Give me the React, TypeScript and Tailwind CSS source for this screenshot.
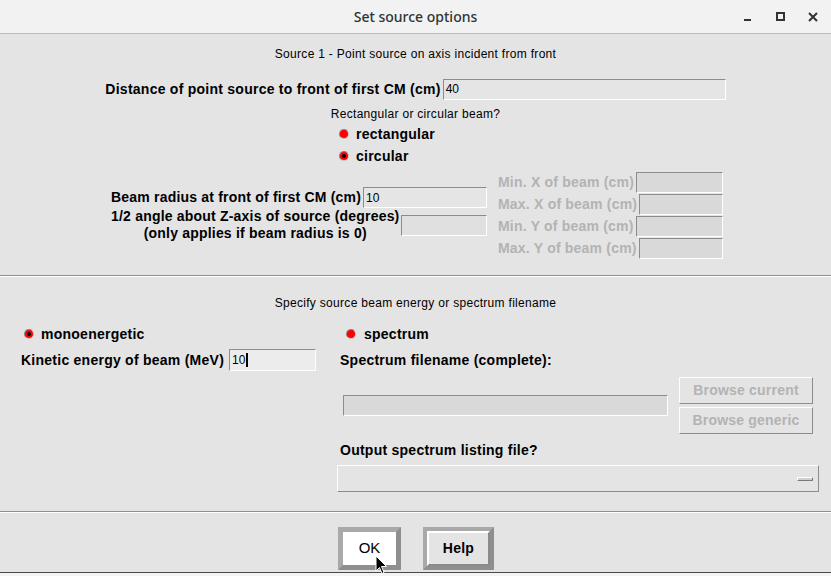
import React from "react";

const sans = { fontFamily: '"Liberation Sans", Arial, sans-serif' };

function Radio({ checked = false }: { checked?: boolean }) {
  return (
    <span className="flex h-[10px] w-[10px] shrink-0 items-center justify-center rounded-full border border-t-[#8a8a8a] border-l-[#8a8a8a] border-b-[#c8c8c8] border-r-[#c8c8c8] bg-[#ff0000]">
      {checked && <span className="h-[4px] w-[4px] rounded-full bg-black" />}
    </span>
  );
}

function Entry({
  className = "",
  disabled = false,
  children,
}: {
  className?: string;
  disabled?: boolean;
  children?: React.ReactNode;
}) {
  return (
    <div
      className={[
        "flex items-center border border-t-[#8c8c8c] border-l-[#8c8c8c] border-b-white border-r-white px-[2px] text-[12px] font-normal tracking-normal text-black",
        disabled ? "bg-[#d9d9d9]" : "bg-[#e5e5e5]",
        className,
      ].join(" ")}
    >
      {children}
    </div>
  );
}

function Separator() {
  return <div className="h-[2px] w-full border-t border-t-[#8f8f8f] border-b border-b-white" />;
}

export default function App() {
  return (
    <div
      className="relative flex h-[576px] w-[831px] flex-col overflow-hidden bg-[#e4e4e4] text-black"
      style={sans}
    >
      {/* title bar */}
      <div className="relative flex h-[34px] shrink-0 items-center justify-center border-b border-b-[#bcbcbc] bg-[#f2f2f2]">
        <span
          className="text-[14px] font-medium text-[#2e3436]"
          style={{ fontFamily: '"Noto Sans", "DejaVu Sans", sans-serif' }}
        >
          Set source options
        </span>
        <div className="absolute right-[12px] top-0 flex h-[34px] items-center gap-[21px] text-[#2e3436]">
          <svg width="12" height="12" viewBox="0 0 12 12">
            <rect x="3" y="8" width="7" height="2" fill="currentColor" />
          </svg>
          <svg width="12" height="12" viewBox="0 0 12 12">
            <rect x="3" y="2" width="7" height="7" fill="none" stroke="currentColor" strokeWidth="2" />
          </svg>
          <svg width="12" height="12" viewBox="0 0 12 12">
            <path d="M2 2 L10 10 M10 2 L2 10" stroke="currentColor" strokeWidth="2" />
          </svg>
        </div>
      </div>

      {/* source section */}
      <div className="flex h-[40px] items-center justify-center text-[12px] tracking-[0.3px]">
        Source 1 - Point source on axis incident from front
      </div>
      <div className="flex h-[30px] items-center justify-center">
        <span className="text-[14px] font-bold tracking-[0.25px]">
          Distance of point source to front of first CM (cm)
        </span>
        <Entry className="ml-[2px] h-[21px] w-[283px]">40</Entry>
      </div>
      <div className="flex h-[19px] items-center justify-center text-[12px] tracking-[0.3px]">
        Rectangular or circular beam?
      </div>
      <div className="flex h-[22px] items-center gap-[7px] pl-[339px]">
        <Radio />
        <span className="text-[14px] font-bold tracking-[0.25px]">rectangular</span>
      </div>
      <div className="flex h-[22px] items-center gap-[7px] pl-[339px]">
        <Radio checked />
        <span className="text-[14px] font-bold tracking-[0.25px]">circular</span>
      </div>

      <div className="flex h-[104px] pl-[111px] pt-[4px] text-[14px] font-bold tracking-[0.2px]">
        <div className="flex w-[376px] flex-col pt-[16px]">
          <div className="flex h-[21px] items-center">
            <span className="whitespace-nowrap">Beam radius at front of first CM (cm)</span>
            <Entry className="ml-[2px] h-[21px] flex-1">10</Entry>
          </div>
          <div className="flex items-center">
            <div className="flex flex-col items-center whitespace-nowrap leading-[17px]">
              <span>1/2 angle about Z-axis of source (degrees)</span>
              <span>(only applies if beam radius is 0)</span>
            </div>
            <Entry disabled className="ml-[2px] h-[21px] flex-1 bg-[#e0e0e0]" />
          </div>
        </div>
        <div className="ml-[11px] flex w-[225px] flex-col text-[#b3b3b3]">
          <div className="flex h-[22px] items-center">
            <span className="whitespace-nowrap">Min. X of beam (cm)</span>
            <Entry disabled className="ml-[2px] h-[21px] flex-1" />
          </div>
          <div className="flex h-[22px] items-center">
            <span className="whitespace-nowrap">Max. X of beam (cm)</span>
            <Entry disabled className="ml-[2px] h-[21px] flex-1" />
          </div>
          <div className="flex h-[22px] items-center">
            <span className="whitespace-nowrap">Min. Y of beam (cm)</span>
            <Entry disabled className="ml-[2px] h-[21px] flex-1" />
          </div>
          <div className="flex h-[22px] items-center">
            <span className="whitespace-nowrap">Max. Y of beam (cm)</span>
            <Entry disabled className="ml-[2px] h-[21px] flex-1" />
          </div>
        </div>
      </div>

      <div className="mt-[4px]">
        <Separator />
      </div>

      {/* energy section */}
      <div className="mt-[16px] flex h-[20px] items-center justify-center text-[12px] tracking-[0.3px]">
        Specify source beam energy or spectrum filename
      </div>
      <div className="mt-[10px] flex text-[14px] font-bold tracking-[0.25px]">
        <div className="flex w-[337px] flex-col pl-[21px]">
          <div className="flex h-[22px] items-center gap-[7px] pl-[3px]">
            <Radio checked />
            <span>monoenergetic</span>
          </div>
          <div className="flex h-[30px] items-center">
            <span className="whitespace-nowrap">Kinetic energy of beam (MeV)</span>
            <Entry className="ml-[5px] h-[22px] w-[87px] bg-[#ececec]">
              10<span className="ml-[1px] inline-block h-[14px] w-[2px] bg-black" />
            </Entry>
          </div>
        </div>
        <div className="flex w-[482px] flex-col">
          <div className="flex h-[22px] items-center gap-[8px] pl-[9px]">
            <Radio />
            <span>spectrum</span>
          </div>
          <div className="flex h-[30px] items-center pl-[3px]">
            <span>Spectrum filename (complete):</span>
          </div>
          <div className="flex h-[62px]">
            <Entry disabled className="ml-[6px] mt-[20px] h-[21px] w-[325px]" />
            <div className="ml-[11px] mt-[2px] flex flex-col gap-[3px]">
              <div className="flex h-[27px] w-[134px] items-center justify-center border border-t-white border-l-white border-b-[#8c8c8c] border-r-[#8c8c8c] tracking-[0.2px] text-[#b3b3b3]">
                Browse current
              </div>
              <div className="flex h-[27px] w-[134px] items-center justify-center border border-t-white border-l-white border-b-[#8c8c8c] border-r-[#8c8c8c] tracking-[0.2px] text-[#b3b3b3]">
                Browse generic
              </div>
            </div>
          </div>
          <div className="flex h-[26px] items-center pl-[3px]">
            <span>Output spectrum listing file?</span>
          </div>
          <div className="mt-[2px] flex h-[27px] w-[482px] items-center justify-end border border-t-white border-l-white border-b-[#8c8c8c] border-r-[#8c8c8c] pr-[5px]">
            <div className="h-[4px] w-[16px] border border-t-white border-l-white border-b-[#7a7a7a] border-r-[#7a7a7a] bg-[#d0d0d0]" />
          </div>
        </div>
      </div>

      <div className="mt-[19px]">
        <Separator />
      </div>

      {/* buttons */}
      <div className="mt-[14px] flex gap-[22px] pl-[338px]">
        <div className="h-[43px] w-[63px] border-[5px] border-t-[#a9a9a9] border-l-[#a9a9a9] border-b-[#8f8f8f] border-r-[#8f8f8f]">
          <div className="flex h-full w-full items-center justify-center bg-white text-[15px]">OK</div>
        </div>
        <div className="h-[43px] w-[71px] border-[4px] border-t-[#a9a9a9] border-l-[#a9a9a9] border-b-[#8f8f8f] border-r-[#8f8f8f]">
          <div className="flex h-full w-full items-center justify-center border-2 border-t-white border-l-white border-b-[#8a8a8a] border-r-[#8a8a8a] bg-[#e4e4e4] text-[14px] font-bold tracking-[0.25px]">
            Help
          </div>
        </div>
      </div>

      {/* window below */}
      <div className="absolute bottom-0 left-0 h-[4px] w-full border-t border-t-[#4a4a4a] bg-[#f4f4f4]" />

      {/* mouse cursor */}
      <svg className="absolute left-[375px] top-[555px]" width="13" height="20" viewBox="0 0 13 20">
        <path d="M1 1 L1 16 L4.5 12.5 L7 18.5 L9 17.5 L6.5 11.5 L11.5 11.5 Z" fill="black" stroke="white" strokeWidth="1" />
      </svg>
    </div>
  );
}
